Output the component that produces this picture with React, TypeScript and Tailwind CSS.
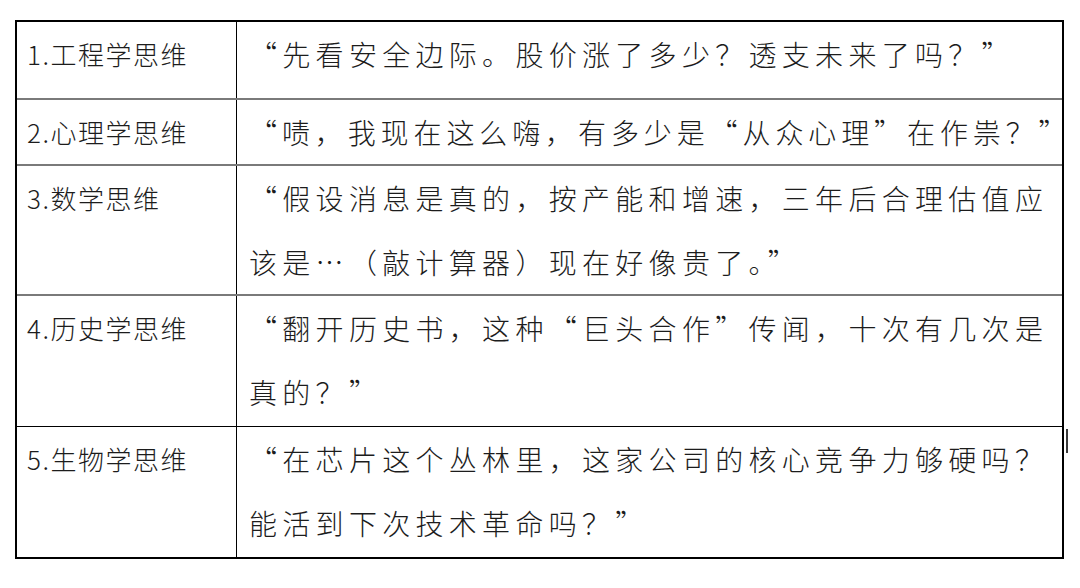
const rows = [
  {
    label: "1.工程学思维",
    lines: ["“先看安全边际。股价涨了多少？透支未来了吗？”"],
    height: "h-[78px]",
    border: "border-b-2 border-[#7a7a7a]",
    tracking: "tracking-[5.3px]",
  },
  {
    label: "2.心理学思维",
    lines: ["“啧，我现在这么嗨，有多少是“从众心理”在作祟？”"],
    height: "h-[66px]",
    border: "border-b-2 border-[#7a7a7a]",
    tracking: "tracking-[4.9px]",
  },
  {
    label: "3.数学思维",
    lines: ["“假设消息是真的，按产能和增速，三年后合理估值应", "该是…（敲计算器）现在好像贵了。”"],
    height: "h-[130px]",
    border: "border-b-2 border-[#7a7a7a]",
    tracking: "tracking-[5.3px]",
  },
  {
    label: "4.历史学思维",
    lines: ["“翻开历史书，这种“巨头合作”传闻，十次有几次是", "真的？”"],
    height: "h-[131px]",
    border: "border-b border-black",
    tracking: "tracking-[5.3px]",
  },
  {
    label: "5.生物学思维",
    lines: ["“在芯片这个丛林里，这家公司的核心竞争力够硬吗？", "能活到下次技术革命吗？”"],
    height: "h-[130px]",
    border: "",
    tracking: "tracking-[5.3px]",
  },
];

export default function App() {
  return (
    <div className="w-[1080px] h-[588px] bg-white pt-[20px] pl-[15px]">
      <div
        className="relative w-[1049px] border-2 border-black text-[#1c1c1c] font-light"
        style={{ fontFamily: '"Noto Sans CJK SC", "Noto Sans", sans-serif' }}
      >
        {rows.map((row) => (
          <div key={row.label} className={`flex ${row.height} ${row.border}`}>
            <div className="w-[220px] shrink-0 border-r border-black pl-[10px] text-[26px] leading-[64px] tracking-[1.5px] whitespace-nowrap">
              {row.label}
            </div>
            <div className={`flex-1 pl-[12px] text-[28px] leading-[64px] ${row.tracking}`}>
              {row.lines.map((line) => (
                <div key={line} className="whitespace-nowrap">
                  {line}
                </div>
              ))}
            </div>
          </div>
        ))}
        {/* stray cursor mark beside the table */}
        <div className="absolute left-[1049px] top-[407px] w-[2px] h-[24px] bg-[#3a3a3a]" />
      </div>
    </div>
  );
}
